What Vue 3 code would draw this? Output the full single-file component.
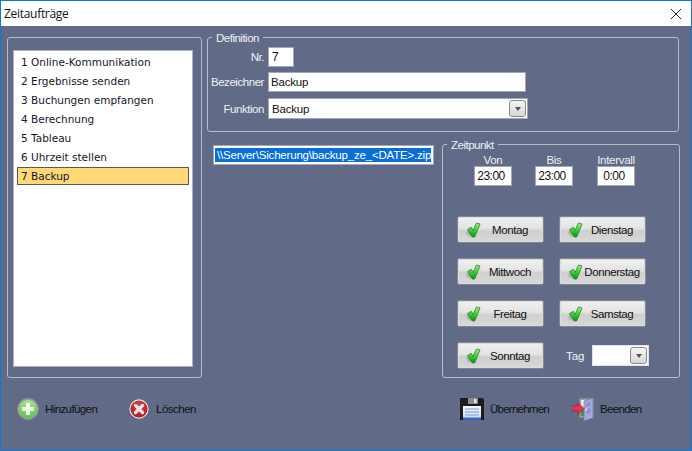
<script setup>
const jobs = ['1 Online-Kommunikation','2 Ergebnisse senden','3 Buchungen empfangen','4 Berechnung','5 Tableau','6 Uhrzeit stellen','7 Backup']
const times = [{l:'Von',v:'23:00'},{l:'Bis',v:'23:00'},{l:'Intervall',v:'0:00'}]
const days = ['Montag','Dienstag','Mittwoch','Donnerstag','Freitag','Samstag','Sonntag']
</script>

<template>
  <div class="window">
    <header class="title">
      <span>Zeitaufträge</span>
      <svg class="close" width="12" height="12" viewBox="0 0 12 12"><path d="M1 1l10 10M11 1L1 11" stroke="#222" stroke-width="1" fill="none"/></svg>
    </header>
    <main class="body">
      <div class="top">
        <section class="group left">
          <ul class="list">
            <li v-for="(j,i) in jobs" :key="j" :class="{sel:i===6}">{{ j }}</li>
          </ul>
        </section>
        <div class="right">
          <section class="group def">
            <span class="legend">Definition</span>
            <div class="row r1"><label>Nr.</label><div class="input nr">7</div></div>
            <div class="row r2"><label>Bezeichner</label><div class="input name">Backup</div></div>
            <div class="row r3"><label>Funktion</label>
              <div class="input func">Backup
                <span class="drop"><i></i></span>
              </div>
            </div>
          </section>
          <div class="lower">
            <div class="input path"><span>\\Server\Sicherung\backup_ze_&lt;DATE&gt;.zip</span></div>
            <section class="group zeit">
              <span class="legend">Zeitpunkt</span>
              <div class="times">
                <div v-for="t in times" :key="t.l" class="tcol">
                  <span class="tlabel">{{ t.l }}</span>
                  <div class="input tinp">{{ t.v }}</div>
                </div>
              </div>
              <div class="days">
                <button v-for="d in days" :key="d" class="day">
                  <svg class="check" width="20" height="20" viewBox="0 0 20 20">
                    <defs>
                      <linearGradient id="cg" x1="0" y1="0" x2="0" y2="1"><stop offset="0" stop-color="#a8f07e"/><stop offset=".5" stop-color="#3fd02f"/><stop offset="1" stop-color="#0a8f24"/></linearGradient>
                      <radialGradient id="cs"><stop offset="0" stop-color="#555" stop-opacity=".55"/><stop offset="1" stop-color="#555" stop-opacity="0"/></radialGradient>
                    </defs>
                    <ellipse cx="6" cy="14" rx="6" ry="4.500" fill="url(#cs)"/>
                    <path d="M2.500 10.500l3.800-2.200 1.700 3.200L11.500 4l3.500 1-5.300 13H7.200z" fill="url(#cg)" stroke="#1d8a2c" stroke-width=".8" stroke-linejoin="round"/>
                  </svg>
                  {{ d }}
                </button>
                <div class="tag">
                  <span>Tag</span>
                  <div class="input tagbox"><span class="drop"><i></i></span></div>
                </div>
              </div>
            </section>
          </div>
        </div>
      </div>
      <footer class="foot">
        <div class="act a1">
          <svg width="22" height="24" viewBox="0 0 24 26">
            <defs><linearGradient id="pg" x1="0" y1="0" x2="0" y2="1"><stop offset="0" stop-color="#a4e88a"/><stop offset="1" stop-color="#5cc43f"/></linearGradient></defs>
            <circle cx="12" cy="13" r="10.800" fill="url(#pg)" stroke="#9a9da0" stroke-width="1.800"/>
            <path d="M12 6.500v13M5.500 13h13" stroke="#eef8ea" stroke-width="4.400"/>
          </svg>
          <span>Hinzufügen</span>
        </div>
        <div class="act a2">
          <svg width="20" height="20" viewBox="0 0 22 22">
            <defs><radialGradient id="xg" cx=".5" cy=".35" r=".7"><stop offset="0" stop-color="#d8484e"/><stop offset="1" stop-color="#a3161f"/></radialGradient></defs>
            <circle cx="11" cy="11" r="10" fill="url(#xg)" stroke="#f2e4e4" stroke-width="1.200"/>
            <path d="M7 7l8 8M15 7l-8 8" stroke="#f3e6e6" stroke-width="3.600" stroke-linecap="round"/>
          </svg>
          <span>Löschen</span>
        </div>
        <div class="act a3">
          <svg width="24" height="24" viewBox="0 0 24 24">
            <defs><linearGradient id="fg" x1="0" y1="0" x2="0" y2="1"><stop offset="0" stop-color="#f4f7fc"/><stop offset="1" stop-color="#c6d6f0"/></linearGradient></defs>
            <path d="M0 2.500A1 1 0 0 1 1 1h21.500l1.500 1.500V23H0z" fill="#1c1c1c"/>
            <rect x="8" y="1" width="10" height="6" fill="#8c8c8c"/>
            <rect x="14" y="2" width="2.500" height="4" fill="#e6e6e6"/>
            <rect x="3" y="9" width="18" height="14" fill="url(#fg)"/>
            <path d="M5 12h14M5 15h14M5 18h14" stroke="#7f9fd8" stroke-width="1"/>
            <rect x="3" y="20.500" width="18" height="2.500" fill="#2f68c9"/>
          </svg>
          <span>Übernehmen</span>
        </div>
        <div class="act a4">
          <svg width="25" height="24" viewBox="0 0 25 24">
            <rect x="7" y="1" width="15" height="20" fill="#9a9ea6" stroke="#6d7078"/>
            <rect x="9" y="3" width="5" height="16" fill="#e8f2e4"/>
            <rect x="9" y="12" width="4" height="7" fill="#3a9a3a"/>
            <path d="M12 4l9-3v20l-9 3z" fill="#a6a8e0" stroke="#74769e" stroke-width=".7"/>
            <path d="M14.500 6l4-1.200v4l-4 1zM14.500 12l4-1v5l-4 1.200z" fill="#8c8ecb"/>
            <circle cx="14.500" cy="12.500" r=".9" fill="#eee"/>
            <path d="M0 9h6V5.500l6 6-6 6V14H0z" fill="#e8304f" stroke="#a31832" stroke-width=".6"/>
          </svg>
          <span>Beenden</span>
        </div>
      </footer>
    </main>
  </div>
</template>

<style>
html, body { margin: 0; padding: 0; background: #616a86; }
</style>

<style scoped>
.window { width: 692px; height: 451px; box-sizing: border-box; border: 1px solid #0a7ad6; display: flex; flex-direction: column; background: #616a86; font-family: "Liberation Sans", Arial, sans-serif; font-size: 11.500px; color: #f0f1f5; overflow: hidden; }
.title { height: 25px; flex: none; background: #fff; display: flex; align-items: center; justify-content: space-between; padding: 0 9px 0 3px; font-family: "Open Sans", sans-serif; font-size: 12px; letter-spacing: -0.3px; color: #111; }
.body { flex: 1; display: flex; flex-direction: column; padding: 11px 0 0 6px; }
.top { display: flex; gap: 5px; }
.group { position: relative; box-sizing: border-box; border: 1px solid #b9bdc9; border-radius: 3px; }
.legend { position: absolute; left: 4px; top: -6px; background: #616a86; padding: 0 4px; line-height: 13px; letter-spacing: -0.5px; font-size: 11.500px; }
.left { flex: none; width: 195px; height: 341px; padding: 12px 5px; }
.list { margin: 0; padding: 2px 3px; list-style: none; box-sizing: border-box; width: 180px; height: 317px; background: #fff; border: 1px solid #aab1c6; font-family: "DejaVu Sans", sans-serif; font-size: 10.500px; color: #15152a; }
.list li { height: 19px; line-height: 19px; padding-left: 4px; box-sizing: border-box; }
.list li.sel { background: #ffd978; border: 1px solid #5a5a50; height: 18px; line-height: 17px; padding-left: 3px; }
.right { flex: none; width: 473px; }
.def { height: 95px; padding-top: 9px; width: 472px; }
.row { display: flex; align-items: center; }
.row label { width: 56px; margin-right: 4px; text-align: right; letter-spacing: -0.45px; white-space: nowrap; }
.r2 { margin-top: 5px; }
.r3 { margin-top: 6px; }
.input { box-sizing: border-box; background: #fff; border: 1px solid #a0a7bd; color: #111; position: relative; }
.nr { width: 26px; height: 20px; padding-left: 3px; line-height: 18px; font-size: 12px; }
.name { width: 258px; height: 20px; padding-left: 2px; line-height: 18px; font-size: 11.500px; letter-spacing: -0.2px; }
.func { width: 260px; height: 21px; padding-left: 3px; line-height: 20px; font-size: 11.500px; letter-spacing: -0.2px; }
.drop { position: absolute; right: 1px; top: 1px; width: 17px; height: 17px; box-sizing: border-box; border: 1px solid #8a8a8a; border-radius: 3px; background: linear-gradient(#f6f6f6, #d6d6d6); display: flex; align-items: center; justify-content: center; }
.drop i { width: 0; height: 0; border: 3px solid transparent; border-top: 4px solid #555; border-bottom: 0; }
.lower { display: flex; align-items: flex-start; }
.path { width: 221px; height: 20px; margin: 13px 0 0 6px; padding: 2px 0 0 1px; font-size: 11.500px; line-height: 14px; overflow: hidden; white-space: nowrap; flex: none; }
.path span { display: block; width: 214px; padding-left: 2px; background: #0a6fd4; color: #fff; letter-spacing: -0.19px; }
.zeit { width: 238px; height: 234px; margin: 12px 0 0 8px; padding: 9px 0 0 14px; flex: none; }
.times { display: flex; gap: 23px; margin-left: 17px; }
.tcol { width: 38px; display: flex; flex-direction: column; align-items: center; }
.tcol:last-child { margin-left: 1px; }
.tlabel { height: 12px; line-height: 13px; letter-spacing: -0.3px; white-space: nowrap; }
.tinp { width: 38px; height: 20px; line-height: 18px; padding-right: 4px; text-align: center; font-size: 12px; letter-spacing: -0.5px; }
.days { display: grid; grid-template-columns: 87px 87px; grid-auto-rows: 27px; column-gap: 15px; row-gap: 15px; margin-top: 30px; }
.day { position: relative; padding: 0 0 0 19px; margin: 0; box-sizing: border-box; border: 1px solid #84878f; border-radius: 2px; background: linear-gradient(#f0f0f0 0%, #e4e4e4 45%, #cfcfcf 55%, #d8d8d8 100%); box-shadow: inset 0 0 0 1px #dcdcdc; font: 11.500px "Liberation Sans", Arial, sans-serif; letter-spacing: -0.4px; color: #111; text-align: center; }
.check { position: absolute; left: 7px; top: 2px; }
.tag { display: flex; align-items: center; padding-left: 7px; gap: 8px; }
.tag > span { color: #f0f1f5; margin-top: 1px; letter-spacing: -0.1px; }
.tagbox { width: 57px; height: 21px; flex: none; border-color: #dfe2ea; }
.foot { display: flex; align-items: center; margin-top: 19px; height: 24px; color: #111; }
.act { display: flex; align-items: center; flex: none; }
.a1 { margin-left: 10px; gap: 6px; letter-spacing: -0.6px; width: 81px; }
.a2 { margin-left: 31px; gap: 7px; letter-spacing: -0.5px; width: 67px; }
.a3 { margin-left: 264px; gap: 6px; letter-spacing: -0.75px; width: 89px; }
.a4 { margin-left: 23px; gap: 3px; letter-spacing: -0.65px; }
</style>
